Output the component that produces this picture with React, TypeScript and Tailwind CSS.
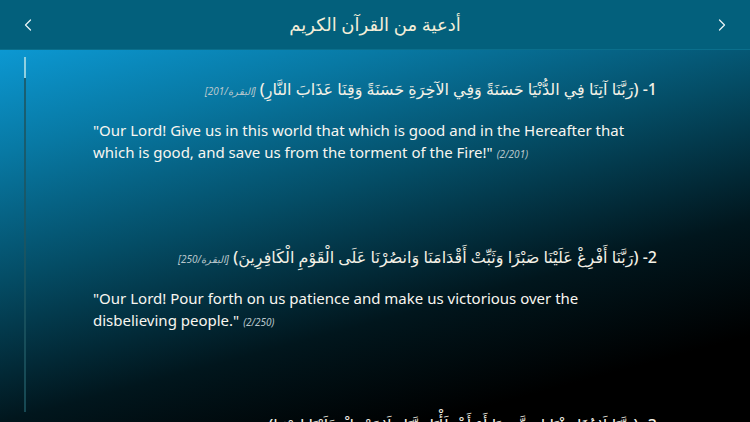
import React from 'react';
import { ChevronLeft, ChevronRight } from 'lucide-react';

type Dua = {
    num: number;
    arabic: string;
    ref: string;
    english: string;
    cite: string;
};

const duas: Dua[] = [
    {
        num: 1,
        arabic: 'رَبَّنَا آتِنَا فِي الدُّنْيَا حَسَنَةً وَفِي الآخِرَةِ حَسَنَةً وَقِنَا عَذَابَ النَّارِ',
        ref: 'البقرة/201',
        english:
            '"Our Lord! Give us in this world that which is good and in the Hereafter that which is good, and save us from the torment of the Fire!"',
        cite: '(2/201)',
    },
    {
        num: 2,
        arabic: 'رَبَّنَا أَفْرِغْ عَلَيْنَا صَبْرًا وَثَبِّتْ أَقْدَامَنَا وَانصُرْنَا عَلَى الْقَوْمِ الْكَافِرِينَ',
        ref: 'البقرة/250',
        english: '"Our Lord! Pour forth on us patience and make us victorious over the disbelieving people."',
        cite: '(2/250)',
    },
    {
        num: 3,
        arabic: 'رَبَّنَا لَا تُؤَاخِذْنَا إِن نَّسِينَا أَوْ أَخْطَأْنَا رَبَّنَا وَلَا تَحْمِلْ عَلَيْنَا إِصْرًا',
        ref: 'البقرة/286',
        english: '"Our Lord! Punish us not if we forget or fall into error."',
        cite: '(2/286)',
    },
];

const DuaItem: React.FC<{ dua: Dua }> = ({ dua }) => (
    <div className="mb-[80px]">
        <p dir="rtl" className="text-[16px] leading-[24px] font-medium text-[#f4f1e6] whitespace-nowrap">
            {dua.num}- ({dua.arabic}){' '}
            <span className="text-[10px] font-normal italic text-[#b9c7cc]">[{dua.ref}]</span>
        </p>
        <p className="mt-[16px] text-[15px] leading-[22px] text-[#f8f6f0]">
            {dua.english} <span className="text-[10px] italic text-[#b9c7cc]">{dua.cite}</span>
        </p>
    </div>
);

export default function App() {
    return (
        <div className="w-[750px] h-[422px] overflow-hidden flex flex-col bg-black font-['Noto_Sans','DejaVu_Sans',sans-serif]">
            {/* Header */}
            <div className="h-[50px] shrink-0 flex items-center justify-between px-[18px] bg-[#03607c] border-b border-[#0b6f8c]">
                <ChevronLeft className="w-5 h-5 text-[#e8f2f5]" strokeWidth={1.5} />
                <h1 dir="rtl" className="text-[18px] font-medium text-[#f3eed8]">أدعية من القرآن الكريم</h1>
                <ChevronRight className="w-5 h-5 text-[#e8f2f5]" strokeWidth={1.5} />
            </div>

            {/* Body */}
            <div className="relative flex-1 overflow-hidden bg-[linear-gradient(165deg,#0c98d2_0%,#0879a4_18%,#044d66_40%,#01161d_65%,#000_85%)]">
                {/* Scrollbar */}
                <div className="absolute left-[24px] top-[7px] bottom-[10px] w-[2px] bg-[#1d5560]/80">
                    <div className="h-[21px] w-full bg-[#8fd0e0]" />
                </div>

                <div className="px-[93px] pt-[27px]">
                    {duas.map(d => (
                        <DuaItem key={d.num} dua={d} />
                    ))}
                </div>
            </div>
        </div>
    );
}
